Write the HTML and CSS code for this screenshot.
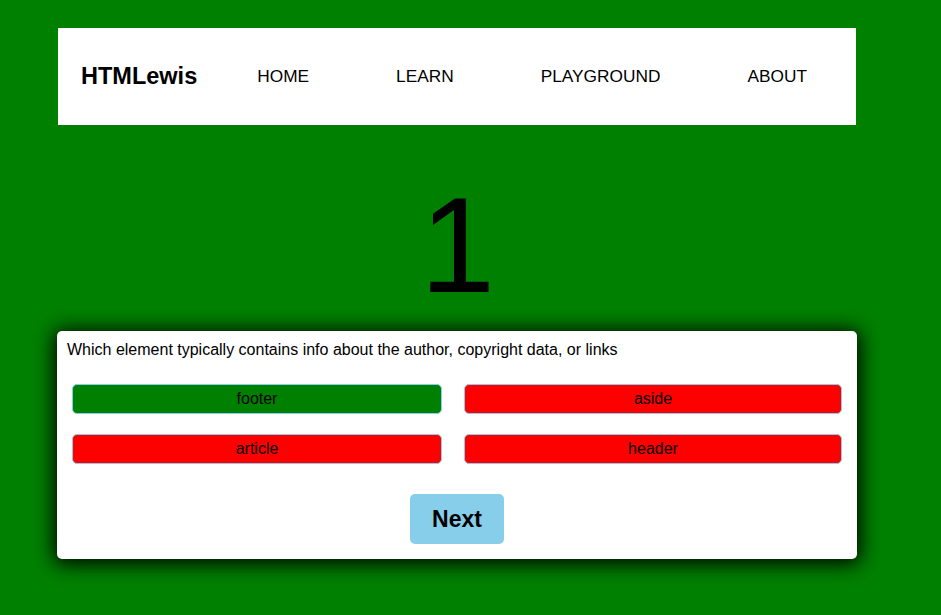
FILE: index.html
```html
<!DOCTYPE html>
<html lang="en">
<head>
<meta charset="utf-8">
<title>HTMLewis Quiz</title>
<link rel="stylesheet" href="styles.css">
</head>
<body>
<div class="page">
  <nav class="nav">
    <div class="logo">HTMLewis</div>
    <ul class="links">
      <li><a href="#">HOME</a></li>
      <li><a href="#">LEARN</a></li>
      <li><a href="#">PLAYGROUND</a></li>
      <li><a href="#">ABOUT</a></li>
    </ul>
  </nav>
  <div class="counter">1</div>
  <section class="card">
    <p class="question">Which element typically contains info about the author, copyright data, or links</p>
    <div class="answers">
      <button class="answer correct">footer</button>
      <button class="answer wrong">aside</button>
      <button class="answer wrong">article</button>
      <button class="answer wrong">header</button>
    </div>
    <div class="actions">
      <button class="next">Next</button>
    </div>
  </section>
</div>
</body>
</html>
```
FILE: styles.css
```css
html, body {
  margin: 0;
  padding: 0;
  background: #008000;
  font-family: "Liberation Sans", Arial, sans-serif;
  color: #000;
}
.page {
  width: 800px;
  margin-left: 57px;
  padding-top: 28px;
  padding-bottom: 56px;
}
.nav {
  margin-left: 1px;
  width: 798px;
  height: 97px;
  background: #fff;
  display: flex;
  align-items: center;
  box-sizing: border-box;
  padding-left: 23px;
}
.logo {
  font-size: 23.5px;
  font-weight: bold;
}
.links {
  list-style: none;
  display: flex;
  gap: 87px;
  margin: 0 0 0 60px;
  padding: 0;
}
.links a {
  color: #000;
  text-decoration: none;
  font-size: 17.3px;
}
.counter {
  text-align: center;
  font-size: 135px;
  line-height: 155px;
  margin-top: 43px;
  padding-left: 1px;
}
.card {
  margin-top: 8px;
  background: #fff;
  border-radius: 5px;
  box-shadow: 0 2px 20px 3px #000;
  padding: 10px 10px 15px;
  height: 228px;
  box-sizing: border-box;
}
.question {
  margin: 0;
  font-size: 16px;
  line-height: 18px;
}
.answers {
  display: grid;
  grid-template-columns: 370fr 378fr;
  column-gap: 22px;
  row-gap: 20px;
  margin: 25px 5px 0;
}
.answer {
  height: 30px;
  border: 1px solid #87ceeb;
  border-radius: 5px;
  font-family: "Liberation Sans", Arial, sans-serif;
  font-size: 16px;
  color: #000;
  padding: 0;
}
.correct { background: #008000; }
.wrong { background: #ff0000; }
.actions {
  display: flex;
  justify-content: center;
  margin-top: 30px;
}
.next {
  width: 94px;
  height: 50px;
  background: #87ceeb;
  border: none;
  border-radius: 5px;
  font-family: "Liberation Sans", Arial, sans-serif;
  font-weight: bold;
  font-size: 23px;
  color: #000;
}
```
